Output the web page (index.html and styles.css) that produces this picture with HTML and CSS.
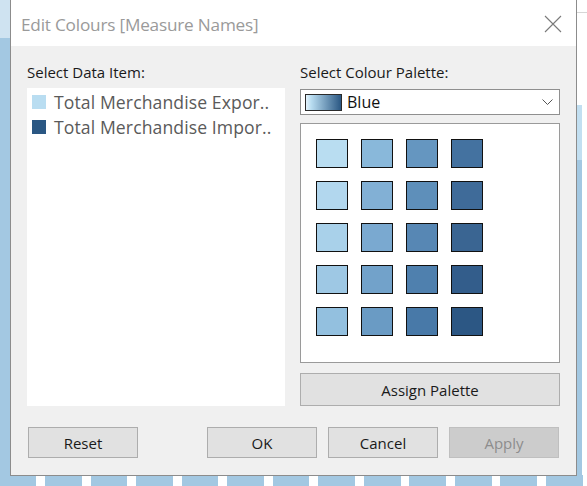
FILE: index.html
```html
<!DOCTYPE html>
<html>
<head>
<meta charset="utf-8">
<link rel="stylesheet" href="styles.css">
</head>
<body>
<div class="desktop">
  <div class="bg-left"></div>
  <div class="bg-right-line"></div>
  <div class="bg-right-strip"></div>
  <div class="bg-bottom"></div>

  <div class="dialog">
    <div class="titlebar">
      <span class="title">Edit Colours [Measure Names]</span>
      <svg class="close" width="18" height="18" viewBox="0 0 18 18"><path d="M1 1 L17 17 M17 1 L1 17" stroke="#7a7a7a" stroke-width="1.1" fill="none"/></svg>
    </div>
    <div class="body">
      <div class="columns">
        <div class="col">
          <div class="label">Select Data Item:</div>
          <div class="listbox">
            <div class="item"><span class="sw sw-light"></span><span class="item-text">Total Merchandise Expor..</span></div>
            <div class="item"><span class="sw sw-dark"></span><span class="item-text">Total Merchandise Impor..</span></div>
          </div>
        </div>
        <div class="col">
          <div class="label">Select Colour Palette:</div>
          <div class="dropdown">
            <span class="grad"></span>
            <span class="dd-text">Blue</span>
            <svg class="chev" width="11" height="7" viewBox="0 0 11 7"><path d="M0.5 0.5 L5.5 5.5 L10.5 0.5" stroke="#555" stroke-width="1" fill="none"/></svg>
          </div>
          <div class="palette">
            <div class="grid">
              <span class="cell" style="background:#b9ddf1"></span>
              <span class="cell" style="background:#89b8da"></span>
              <span class="cell" style="background:#6596c0"></span>
              <span class="cell" style="background:#4472a0"></span>
              <span class="cell" style="background:#b2d7ee"></span>
              <span class="cell" style="background:#82b0d5"></span>
              <span class="cell" style="background:#5e8fba"></span>
              <span class="cell" style="background:#3f6b99"></span>
              <span class="cell" style="background:#a9d1ea"></span>
              <span class="cell" style="background:#7aa9d0"></span>
              <span class="cell" style="background:#5787b4"></span>
              <span class="cell" style="background:#3a6592"></span>
              <span class="cell" style="background:#9ec8e4"></span>
              <span class="cell" style="background:#72a2ca"></span>
              <span class="cell" style="background:#4f80ae"></span>
              <span class="cell" style="background:#335d8b"></span>
              <span class="cell" style="background:#93c0df"></span>
              <span class="cell" style="background:#6a9bc4"></span>
              <span class="cell" style="background:#4879a8"></span>
              <span class="cell" style="background:#2c5784"></span>
            </div>
          </div>
          <button class="btn assign">Assign Palette</button>
        </div>
      </div>
      <div class="buttons">
        <button class="btn">Reset</button>
        <div class="spacer"></div>
        <button class="btn">OK</button>
        <button class="btn">Cancel</button>
        <button class="btn disabled">Apply</button>
      </div>
    </div>
  </div>
</div>
</body>
</html>
```
FILE: styles.css
```css
* { box-sizing: border-box; }
html, body { margin: 0; padding: 0; }
body {
  width: 587px;
  height: 486px;
  overflow: hidden;
  background: #ffffff;
  font-family: "Open Sans", "Noto Sans", sans-serif;
}
.desktop {
  position: relative;
  width: 587px;
  height: 486px;
  overflow: hidden;
}
.bg-left {
  position: absolute;
  left: 0; top: 0;
  width: 11px; height: 486px;
  background: linear-gradient(to bottom, #cfe3f1 0, #cfe3f1 38px, #a3c8e2 38px);
}
.bg-right-line {
  position: absolute;
  left: 577px; top: 12px;
  width: 10px; height: 1px;
  background: #d6d6d6;
}
.bg-right-strip {
  position: absolute;
  left: 577px; top: 105px;
  width: 5px; height: 381px;
  background: linear-gradient(to bottom, #c2dff1 0, #c2dff1 55px, #a3c8e2 55px);
}
.bg-bottom {
  position: absolute;
  left: 0; top: 475px;
  width: 587px; height: 11px;
  background: repeating-linear-gradient(to right, #a3c8e2 0, #a3c8e2 36.5px, #ffffff 36.5px, #ffffff 45.5px);
}
.dialog {
  position: absolute;
  left: 10px; top: -1px;
  width: 567px; height: 477px;
  border: 1px solid #8c8c8c;
  background: #f0f0f0;
  display: flex;
  flex-direction: column;
}
.titlebar {
  height: 46px;
  background: #ffffff;
  display: flex;
  align-items: center;
  justify-content: space-between;
  padding: 0 14px 0 10px;
  flex: none;
}
.title {
  font-size: 17.2px;
  color: #9a9a9a;
  letter-spacing: -0.2px;
  margin-top: 2px;
}
.close { margin-top: 2px; }
.body {
  flex: 1;
  padding: 16px 15px 0 16px;
  display: flex;
  flex-direction: column;
}
.columns {
  display: grid;
  grid-template-columns: 258px 260px;
  column-gap: 15px;
}
.col { display: flex; flex-direction: column; }
.label {
  font-size: 15px;
  color: #1a1a1a;
  line-height: 20px;
  height: 20px;
  margin-bottom: 6px;
}
.listbox {
  background: #ffffff;
  height: 318px;
  padding-top: 1px;
}
.item {
  display: flex;
  align-items: center;
  height: 25px;
  padding-left: 5px;
}
.sw {
  width: 14px; height: 14px;
  flex: none;
  margin-right: 8px;
}
.sw-light { background: #b9ddf1; }
.sw-dark { background: #2a5783; }
.item-text {
  font-size: 17.6px;
  color: #5a5a5a;
  white-space: nowrap;
  letter-spacing: 0.1px;
}
.dropdown {
  height: 26px;
  border: 1px solid #8f8f8f;
  background: #ffffff;
  display: flex;
  align-items: center;
  padding: 0 6px 0 4px;
  margin-top: 1px;
}
.grad {
  width: 37px; height: 17px;
  border: 1px solid #2a2a2a;
  background: linear-gradient(to right, #e4f2fb 0, #b9ddf1 15%, #2a5783 100%);
  margin-right: 5px;
  flex: none;
}
.dd-text {
  font-size: 16px;
  color: #111;
  flex: 1;
}
.palette {
  margin-top: 8px;
  height: 240px;
  border: 1px solid #9a9a9a;
  background: #ffffff;
  padding: 15px 0 0 15px;
}
.grid {
  display: grid;
  grid-template-columns: repeat(4, 32px);
  grid-auto-rows: 29px;
  column-gap: 13px;
  row-gap: 13px;
}
.cell {
  display: block;
  border: 1.5px solid #111;
}
.btn {
  font-family: "Open Sans", "Noto Sans", sans-serif;
  font-size: 15px;
  color: #1a1a1a;
  background: #e1e1e1;
  border: 1px solid #adadad;
  padding: 0;
  margin: 0;
}
.assign {
  margin-top: 10px;
  height: 33px;
  width: 260px;
}
.buttons {
  display: flex;
  margin-top: 21px;
  padding-left: 1px;
}
.buttons .btn {
  width: 110px;
  height: 31px;
  margin-left: 11px;
}
.buttons .btn:first-child { margin-left: 0; }
.spacer { width: 58px; }
.buttons .disabled {
  background: #cccccc;
  border-color: #bfbfbf;
  color: #8d8d8d;
}
```
